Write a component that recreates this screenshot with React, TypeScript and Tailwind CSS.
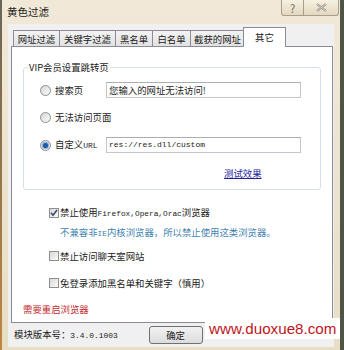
import React from "react";

const Radio = ({ checked }: { checked?: boolean }) => (
  <span className="w-[11px] h-[11px] rounded-full border border-[#8e8f8f] bg-linear-to-br from-[#d6d6d6] to-[#fbfbfb] flex items-center justify-center shrink-0">
    {checked && <span className="w-[5px] h-[5px] rounded-full bg-[#1d5ca6] shadow-[0_0_1px_1px_#7aa3d6]" />}
  </span>
);

const Check = ({ checked }: { checked?: boolean }) => (
  <span className="w-[10px] h-[10px] border border-[#8f8f8f] bg-linear-to-br from-[#d9d9d9] to-[#fafafa] flex items-center justify-center shrink-0">
    {checked && (
      <svg width="8" height="8" viewBox="0 0 8 8">
        <path d="M1 3.8 L3 6.2 L7 1" fill="none" stroke="#3a4d78" strokeWidth="1.6" />
      </svg>
    )}
  </span>
);

const Mono = ({ children, size = "text-[7.8px]" }: { children: React.ReactNode; size?: string }) => (
  <span className={`font-['Liberation_Mono',monospace] ${size}`}>{children}</span>
);

const tabs = [
  { label: "网址过滤", w: "w-[47px]" },
  { label: "关键字过滤", w: "w-[57px]" },
  { label: "黑名单", w: "w-[38px]" },
  { label: "白名单", w: "w-[39px]" },
  { label: "截获的网址", w: "w-[55px]" },
];

export default function App() {
  return (
    <div className="w-[344px] h-[350px] flex overflow-hidden relative bg-[#4f5546] font-['Noto_Sans_CJK_SC',sans-serif] text-[9.4px] leading-[12px] text-[#1a1a1a]">
      <div className="w-[2px] bg-linear-to-b from-[#6a6456] to-[#c0863e]" />
      <div className="w-[338px] h-[350px] flex flex-col bg-linear-to-b from-[#f1e9d7] to-[#e8dec6]">
        {/* title bar */}
        <div className="h-[24px] flex items-start">
          <div className="pl-[5px] pt-[6px] text-[10.5px] leading-[12px]">黄色过滤</div>
          <div className="ml-auto flex h-[16px] mr-[1px]">
            <div className="w-[23px] border border-t-0 border-[#a79f8d] rounded-bl-[3px] bg-linear-to-b from-[#f6f0e2] to-[#e4d9bf] flex items-center justify-center text-[11px] text-[#6e6a62]">
              ?
            </div>
            <div className="w-[35px] border border-t-0 border-l-0 border-[#a79f8d] rounded-br-[3px] bg-linear-to-b from-[#f6f0e2] to-[#e4d9bf] flex items-center justify-center">
              <svg width="11" height="9" viewBox="0 0 11 9">
                <path d="M1 1 L10 8 M10 1 L1 8" stroke="#8a857b" strokeWidth="2.2" fill="none" />
                <path d="M1 1 L10 8 M10 1 L1 8" stroke="#f2eee6" strokeWidth="0.8" fill="none" />
              </svg>
            </div>
          </div>
        </div>

        {/* client area */}
        <div className="h-[323px] mx-[6px] bg-[#f0f0f0] flex flex-col pt-[3px]">
          <div className="h-[19px] flex items-end pl-[5px]">
            {tabs.map((t, i) => (
              <div
                key={i}
                className={`${t.w} h-[16px] border border-b-0 border-[#898c95] bg-linear-to-b from-[#f3f3f3] to-[#e2e2e2] flex items-center justify-center ${i > 0 ? "-ml-px" : ""}`}
              >
                {t.label}
              </div>
            ))}
            <div className="w-[43px] h-[20px] -mb-px -ml-[2px] relative z-10 bg-white border border-b-0 border-[#898c95] flex items-start justify-center pt-[3px]">
              其它
            </div>
          </div>

          <div className="w-[322px] h-[277px] ml-[3px] bg-white border border-[#898c95] flex flex-col px-[11px] pt-[14px]">
            <fieldset className="border border-[#d5dfe5] rounded-[3px] p-0 m-0">
              <legend className="ml-[4px] px-[1px] leading-[12px]">VIP会员设置跳转页</legend>
              <div className="pl-[16px] pt-[9px] pb-[10px] flex flex-col">
                <div className="flex items-center h-[16px]">
                  <div className="w-[66px] flex items-center gap-[4px]">
                    <Radio />
                    <span>搜索页</span>
                  </div>
                  <div className="w-[195px] h-[16px] border border-[#c3c6cc] border-t-[#abadb3] flex items-center pl-[2px]">
                    您输入的网址无法访问!
                  </div>
                </div>
                <div className="flex items-center h-[16px] mt-[11px] gap-[4px]">
                  <Radio />
                  <span>无法访问页面</span>
                </div>
                <div className="flex items-center h-[16px] mt-[12px]">
                  <div className="w-[66px] flex items-center gap-[4px]">
                    <Radio checked />
                    <span>
                      自定义<Mono size="text-[8px]">URL</Mono>
                    </span>
                  </div>
                  <div className="w-[195px] h-[16px] border border-[#c3c6cc] border-t-[#abadb3] flex items-center pl-[2px]">
                    <Mono size="text-[8px]">res://res.dll/custom</Mono>
                  </div>
                </div>
                <div className="mt-[14px] h-[12px] ml-[184px] text-[#22229a] underline underline-offset-[1px]">测试效果</div>
              </div>
            </fieldset>

            <div className="mt-[17px] pl-[26px] flex items-center gap-[1px] h-[12px]">
              <Check checked />
              <span>
                禁止使用<Mono>Firefox,Opera,Orac</Mono>浏览器
              </span>
            </div>
            <div className="mt-[7px] pl-[37px] h-[12px] text-[#4484b0]">
              不兼容非<Mono>IE</Mono>内核浏览器，所以禁止使用这类浏览器。
            </div>
            <div className="mt-[12px] pl-[26px] flex items-center gap-[1px] h-[12px]">
              <Check />
              <span>禁止访问聊天室网站</span>
            </div>
            <div className="mt-[15px] pl-[26px] flex items-center gap-[1px] h-[12px]">
              <Check />
              <span>免登录添加黑名单和关键字（慎用）</span>
            </div>
            <div className="mt-[14px] h-[12px] text-[#c42a2e]">需要重启浏览器</div>
          </div>

          <div className="flex-1 flex items-center pl-[6px]">
            <span>
              模块版本号：<Mono size="text-[7.9px]">3.4.0.1003</Mono>
            </span>
            <div className="ml-[31px] w-[54px] h-[18px] rounded-[3px] border border-[#707070] bg-linear-to-b from-[#f2f2f2] to-[#dcdcdc] flex items-center justify-center">
              确定
            </div>
          </div>
        </div>
      </div>

      <div className="absolute left-[205px] top-[318px] w-[135px] h-[21px] bg-white pl-[4px] font-['Liberation_Sans',Arial,sans-serif] text-[15.2px] leading-[21px] text-[#c0141c]">
        www.duoxue8.com
      </div>
    </div>
  );
}
